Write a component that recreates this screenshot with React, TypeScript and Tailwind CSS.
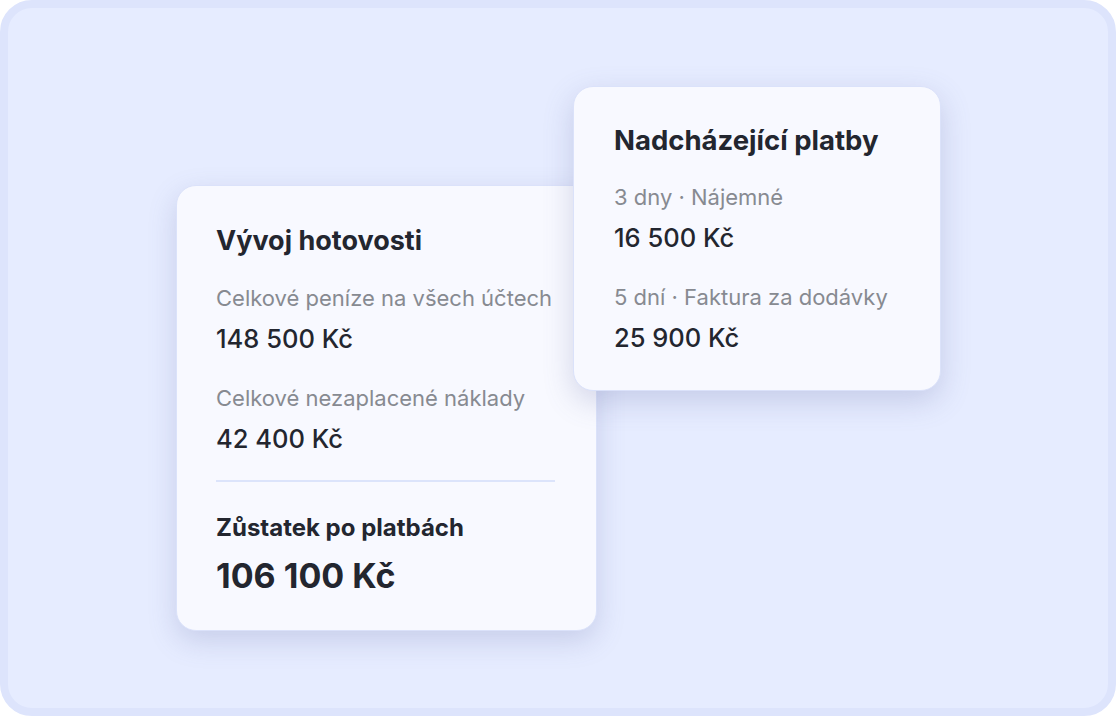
import React from "react";

function Row({ label, value }: { label: string; value: string }) {
  return (
    <div className="flex flex-col">
      <div className="text-[22px] leading-[28px] text-[#878a91] whitespace-nowrap">{label}</div>
      <div className="mt-[13px] text-[25.5px] leading-[28px] font-medium text-[#23262f]">{value}</div>
    </div>
  );
}

export default function App() {
  return (
    <div className="w-[1116px] h-[716px] bg-white" style={{ fontFamily: "Inter, 'Noto Sans', sans-serif" }}>
      <div className="w-full h-full rounded-[32px] border-[8px] border-[#dde4fc] bg-[#e6ecff] flex items-start pl-[168px] pt-[78px]">
        <div className="mt-[99px] w-[421px] h-[446px] shrink-0 rounded-[20px] bg-[#f8f9ff] border border-[#dbe2fa] shadow-[0_10px_28px_rgba(90,100,160,0.22)] pl-[39px] pr-[41px] pt-[40px]">
          <div className="text-[27px] leading-[30px] font-bold text-[#23262f]">Vývoj hotovosti</div>
          <div className="mt-[28px] flex flex-col gap-[31px]">
            <Row label="Celkové peníze na všech účtech" value="148 500 Kč" />
            <Row label="Celkové nezaplacené náklady" value="42 400 Kč" />
          </div>
          <div className="mt-[27px] h-[2px] bg-[#dce4fb]" />
          <div className="mt-[32px] text-[24px] leading-[28px] font-bold text-[#23262f]">Zůstatek po platbách</div>
          <div className="mt-[14px] text-[34px] leading-[40px] font-bold text-[#23262f]">106 100 Kč</div>
        </div>
        <div className="-ml-[24px] w-[368px] h-[305px] shrink-0 rounded-[20px] bg-[#f8f9ff] border border-[#dbe2fa] shadow-[0_10px_30px_rgba(90,100,160,0.24)] pl-[40px] pr-[20px] pt-[38px]">
          <div className="text-[27.5px] leading-[30px] font-bold text-[#23262f] whitespace-nowrap">Nadcházející platby</div>
          <div className="mt-[28px] flex flex-col gap-[31px]">
            <Row label="3 dny · Nájemné" value="16 500 Kč" />
            <Row label="5 dní · Faktura za dodávky" value="25 900 Kč" />
          </div>
        </div>
      </div>
    </div>
  );
}
